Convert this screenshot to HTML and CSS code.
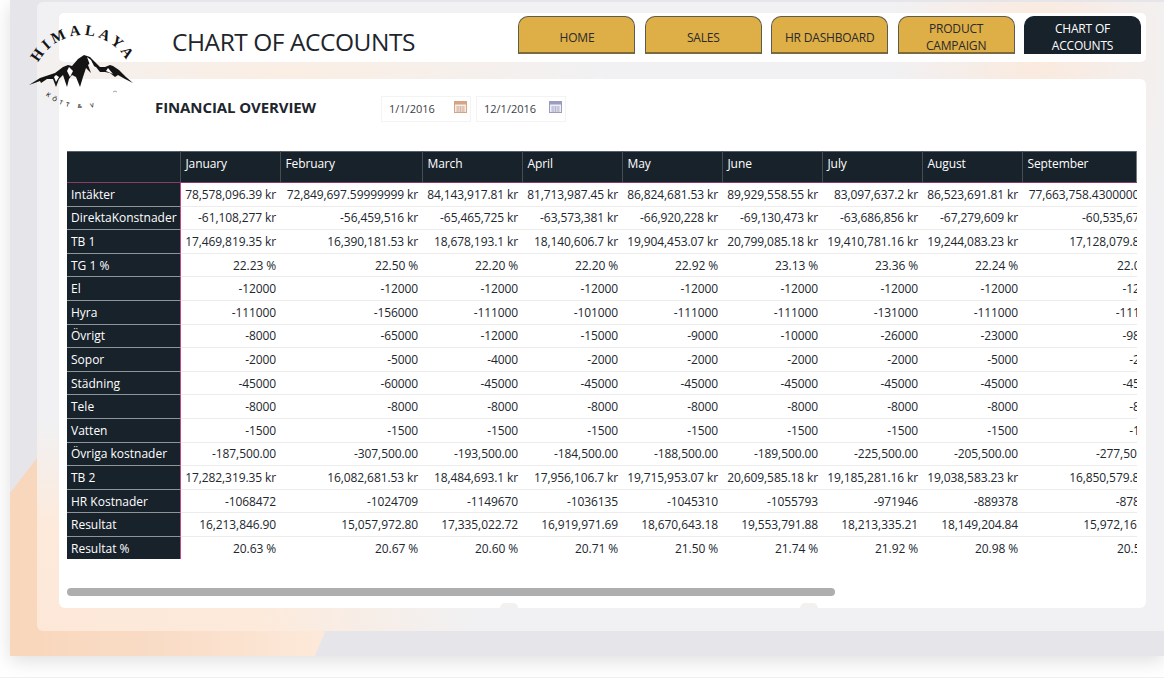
FILE: index.html
```html
<!DOCTYPE html>
<html lang="sv">
<head>
<meta charset="utf-8">
<title>Chart of Accounts</title>
<link rel="stylesheet" href="styles.css">
</head>
<body>
<div class="stage">
  <div class="panel">
    <header class="topbar">
      <h1 class="title">CHART OF ACCOUNTS</h1>
      <nav class="tabs">
        <a class="tab">HOME</a>
        <a class="tab">SALES</a>
        <a class="tab">HR DASHBOARD</a>
        <a class="tab two">PRODUCT CAMPAIGN</a>
        <a class="tab two active">CHART OF ACCOUNTS</a>
      </nav>
    </header>
    <main class="card">
      <div class="filters">
        <h2 class="subtitle">FINANCIAL OVERVIEW</h2>
        <div class="dates">
          <div class="date"><span>1/1/2016</span><svg class="cal" viewBox="0 0 13 13"><rect x="0.5" y="1.5" width="12" height="11" fill="#f6ece4" stroke="#d6a383"/><rect x="0.5" y="1.5" width="12" height="3" fill="#d6a383"/><path d="M2 7h9M2 9h9M2 11h9M4 6v6M6.5 6v6M9 6v6" stroke="#cfae98" stroke-width=".7"/></svg></div>
          <div class="date"><span>12/1/2016</span><svg class="cal" viewBox="0 0 13 13"><rect x="0.5" y="1.5" width="12" height="11" fill="#eeeff6" stroke="#9a9cc0"/><rect x="0.5" y="1.5" width="12" height="3" fill="#9a9cc0"/><path d="M2 7h9M2 9h9M2 11h9M4 6v6M6.5 6v6M9 6v6" stroke="#a9abc6" stroke-width=".7"/></svg></div>
        </div>
      </div>
      <div class="table-wrap">
        <table class="matrix">
          <colgroup><col class="c-head"><col class="c"><col class="c-wide"><col class="c"><col class="c"><col class="c"><col class="c"><col class="c"><col class="c"><col class="c-wide"></colgroup>
          <thead><tr><th class="corner"></th><th>January</th><th>February</th><th>March</th><th>April</th><th>May</th><th>June</th><th>July</th><th>August</th><th>September</th></tr></thead>
          <tbody>
            <tr><th>Intäkter</th><td>78,578,096.39 kr</td><td>72,849,697.59999999 kr</td><td>84,143,917.81 kr</td><td>81,713,987.45 kr</td><td>86,824,681.53 kr</td><td>89,929,558.55 kr</td><td>83,097,637.2 kr</td><td>86,523,691.81 kr</td><td>77,663,758.43000001 kr</td></tr>
            <tr><th>DirektaKonstnader</th><td>-61,108,277 kr</td><td>-56,459,516 kr</td><td>-65,465,725 kr</td><td>-63,573,381 kr</td><td>-66,920,228 kr</td><td>-69,130,473 kr</td><td>-63,686,856 kr</td><td>-67,279,609 kr</td><td>-60,535,678 kr</td></tr>
            <tr><th>TB 1</th><td>17,469,819.35 kr</td><td>16,390,181.53 kr</td><td>18,678,193.1 kr</td><td>18,140,606.7 kr</td><td>19,904,453.07 kr</td><td>20,799,085.18 kr</td><td>19,410,781.16 kr</td><td>19,244,083.23 kr</td><td>17,128,079.85 kr</td></tr>
            <tr><th>TG 1 %</th><td>22.23 %</td><td>22.50 %</td><td>22.20 %</td><td>22.20 %</td><td>22.92 %</td><td>23.13 %</td><td>23.36 %</td><td>22.24 %</td><td>22.05 %</td></tr>
            <tr><th>El</th><td>-12000</td><td>-12000</td><td>-12000</td><td>-12000</td><td>-12000</td><td>-12000</td><td>-12000</td><td>-12000</td><td>-12000</td></tr>
            <tr><th>Hyra</th><td>-111000</td><td>-156000</td><td>-111000</td><td>-101000</td><td>-111000</td><td>-111000</td><td>-131000</td><td>-111000</td><td>-111000</td></tr>
            <tr><th>Övrigt</th><td>-8000</td><td>-65000</td><td>-12000</td><td>-15000</td><td>-9000</td><td>-10000</td><td>-26000</td><td>-23000</td><td>-98000</td></tr>
            <tr><th>Sopor</th><td>-2000</td><td>-5000</td><td>-4000</td><td>-2000</td><td>-2000</td><td>-2000</td><td>-2000</td><td>-5000</td><td>-2000</td></tr>
            <tr><th>Städning</th><td>-45000</td><td>-60000</td><td>-45000</td><td>-45000</td><td>-45000</td><td>-45000</td><td>-45000</td><td>-45000</td><td>-45000</td></tr>
            <tr><th>Tele</th><td>-8000</td><td>-8000</td><td>-8000</td><td>-8000</td><td>-8000</td><td>-8000</td><td>-8000</td><td>-8000</td><td>-8000</td></tr>
            <tr><th>Vatten</th><td>-1500</td><td>-1500</td><td>-1500</td><td>-1500</td><td>-1500</td><td>-1500</td><td>-1500</td><td>-1500</td><td>-1500</td></tr>
            <tr><th>Övriga kostnader</th><td>-187,500.00</td><td>-307,500.00</td><td>-193,500.00</td><td>-184,500.00</td><td>-188,500.00</td><td>-189,500.00</td><td>-225,500.00</td><td>-205,500.00</td><td>-277,500.00</td></tr>
            <tr><th>TB 2</th><td>17,282,319.35 kr</td><td>16,082,681.53 kr</td><td>18,484,693.1 kr</td><td>17,956,106.7 kr</td><td>19,715,953.07 kr</td><td>20,609,585.18 kr</td><td>19,185,281.16 kr</td><td>19,038,583.23 kr</td><td>16,850,579.85 kr</td></tr>
            <tr><th>HR Kostnader</th><td>-1068472</td><td>-1024709</td><td>-1149670</td><td>-1036135</td><td>-1045310</td><td>-1055793</td><td>-971946</td><td>-889378</td><td>-878012</td></tr>
            <tr><th>Resultat</th><td>16,213,846.90</td><td>15,057,972.80</td><td>17,335,022.72</td><td>16,919,971.69</td><td>18,670,643.18</td><td>19,553,791.88</td><td>18,213,335.21</td><td>18,149,204.84</td><td>15,972,167.85</td></tr>
            <tr><th>Resultat %</th><td>20.63 %</td><td>20.67 %</td><td>20.60 %</td><td>20.71 %</td><td>21.50 %</td><td>21.74 %</td><td>21.92 %</td><td>20.98 %</td><td>20.57 %</td></tr>
          </tbody>
        </table>
      </div>
      <div class="scrollbar"><div class="thumb"></div></div>
      <i class="notch n1"></i><i class="notch n2"></i>
    </main>
    <svg class="logo" viewBox="0 0 125 105" aria-label="Himalaya">
      <defs>
        <path id="arcTop" d="M13.8 61.3 A50 50 0 0 1 112.2 61.3"/>
        <path id="arcBot" d="M25.6 80.2 A55 55 0 0 0 95 82"/>
      </defs>
      <text class="logo-top" text-anchor="middle"><textPath href="#arcTop" startOffset="50%">HIMALAYA</textPath></text>
      <text class="logo-bot"><textPath href="#arcBot" startOffset="0">KÖTT &amp; V</textPath></text>
      <path fill="#141414" d="M9 70 L20 63 L29 60 L35 58 L43 52 L48 50 L52 51 L58 44 L64 40 L70 42 L75 47 L80 52 L85 52 L90 50 L93 51 L99 55 L106 62 L113 68 L105 64 L98 60 L95 62 L90 58 L85 57 L80 57 L76 52 L73 51 L71 47 L68 50 L71 58 L66 53 L63 62 L60 72 L56 62 L52 60 L49 64 L47 72 L43 60 L39 64 L36 72 L33 64 L27 64 L21 68 L20 66 Z"/>
      <path fill="#fff" d="M67 42 L71 45 L75 53 L70 50 Z M49 52 L53 56 L50 62 L47 56 Z M88 53 L93 59 L86 56 Z M36 60 L39 62 L36 67 L34 62 Z"/>
      <path fill="none" stroke="#888" stroke-width=".8" d="M93 77 Q95 75 97 77"/>
    </svg>
  </div>
</div>
<div class="ticks">
  <i class="tick t1"></i><i class="tick t2"></i><i class="tick t3"></i><i class="tick t5"></i><i class="tick t6"></i><i class="bar"></i>
</div>
</body>
</html>
```
FILE: styles.css
```css
* { box-sizing: border-box; }
html, body { margin: 0; padding: 0; height: 678px; overflow: hidden; background: #fff; }
body { font-family: "Open Sans", "Noto Sans", sans-serif; color: #1d252d; position: relative; }

.stage {
  position: relative;
  margin-left: 10px;
  height: 656px;
  padding: 2px 0 25px 27px;
  background: #e6e5ea;
  box-shadow: 0 5px 18px rgba(0,0,0,.13);
}
.stage::before {
  content: "";
  position: absolute;
  inset: 0;
  background: linear-gradient(90deg, #f8d6bb 0, #f9dcc6 150px, #fde9da 315px);
  clip-path: polygon(0 493px, 27px 458px, 315px 632px, 305px 656px, 0 656px);
}
.panel {
  position: relative;
  height: 629px;
  padding: 11px 18px 23px 22px;
  border-radius: 6px 0 0 6px;
  background:
    radial-gradient(ellipse 440px 210px at 0 100%, #fde8d8 0, #fdeadb 50%, rgba(253,234,219,0) 100%),
    radial-gradient(ellipse 150px 240px at 1000px 50px, #fbeade 0, rgba(251,234,222,0) 100%),
    radial-gradient(ellipse 330px 45px at 250px 70px, #fbeee3 0, rgba(251,238,227,0) 100%),
    #f1f1f3;
  display: flex;
  flex-direction: column;
  gap: 17px;
}
.topbar {
  height: 49px;
  background: #fff;
  border-radius: 5px;
  display: flex;
  justify-content: space-between;
  padding: 3px 5px 0 113px;
}
.title { margin: 8px 0 0; font-size: 24.5px; line-height: 36px; font-weight: 400; color: #1d252d; letter-spacing: -.45px; }
.tabs { display: flex; gap: 9.4px; }
.tab {
  width: 117px;
  height: 38px;
  padding-top: 12px;
  background: #deae47;
  border: 1px solid #5d5a4e;
  border-bottom: 2px solid #7b6a3e;
  border-radius: 10px 10px 0 0;
  font-size: 12px;
  line-height: 17px;
  text-align: center;
  color: #2b2a2a;
  letter-spacing: -.2px;
}
.tab.two { padding: 3px 14px 0; }
.tab.active { background: #18222b; border-color: #18222b; color: #fff; }

.card {
  position: relative;
  flex: 1;
  background: #fff;
  border-radius: 6px;
  display: flex;
  flex-direction: column;
  padding-left: 8px;
}
.notch { position: absolute; bottom: 0; width: 18px; height: 5px; background: #f3f1f0; border-radius: 7px 7px 0 0; }
.n1 { left: 441px; }
.n2 { left: 741px; }
.filters { height: 72px; display: flex; padding-top: 17px; }
.subtitle { margin: 1px 0 0 88px; width: 226px; font-size: 15px; line-height: 20px; font-weight: 700; color: #1d252d; letter-spacing: -.1px; }
.dates { display: flex; gap: 5px; }
.date {
  height: 26px;
  width: 90px;
  border: 1px solid #f3f3f3;
  display: flex;
  align-items: center;
  justify-content: space-between;
  padding: 0 3px 2px 7px;
  font-size: 11px;
  color: #3a4048;
}
.cal { width: 13px; height: 13px; margin-top: -3px; }

.table-wrap { position: relative; width: 1070px; height: 408px; overflow: hidden; }
.table-wrap::after { content: ""; position: absolute; top: 0; right: 0; width: 1px; height: 31px; background: #747a80; }
.matrix { border-collapse: collapse; table-layout: fixed; width: 1097px; font-size: 12px; letter-spacing: -.1px; }
.c-head { width: 113px; }
.c { width: 100px; }
.c-wide { width: 142px; }
.matrix th, .matrix td { padding: 0 4px; white-space: nowrap; overflow: hidden; font-weight: 400; }
.matrix thead th {
  height: 31px;
  background: #18222b;
  color: #fff;
  text-align: left;
  padding: 0 4px 7px 5px;
  border-top: 1px solid #5a6068;
  border-right: 1px solid #454c54;
  border-bottom: 1px solid #8a3a66;
}
.matrix thead th:last-child { border-right: 0; }
.matrix tbody th {
  height: 23.6px;
  background: #18222b;
  color: #fff;
  text-align: left;
  border-bottom: 1px solid #8f9499;
  border-right: 1px solid #c9458c;
  letter-spacing: 0;
}
.matrix tbody tr:last-child th { border-bottom: 0; }
.matrix td { height: 23.6px; text-align: right; color: #22272e; border-bottom: 1px solid #ececec; }
.matrix tbody tr:last-child td { border-bottom: 0; }

.scrollbar { margin-top: 29px; height: 8px; width: 1070px; }
.thumb { width: 768px; height: 8px; border-radius: 4px; background: #aeaeae; }

.logo { position: absolute; left: -17px; top: 13px; width: 125px; height: 105px; }
.logo-top { font-family: "Liberation Serif", serif; font-weight: 700; font-size: 15px; letter-spacing: 3.5px; fill: #141414; }
.logo-bot { font-family: "Open Sans", sans-serif; font-size: 6px; font-weight: 600; letter-spacing: 3.6px; fill: #333; }

.ticks { position: absolute; left: 0; right: 0; top: 677px; height: 1px; border-top: 1px solid #f0f0f0; }
.tick { position: absolute; top: 0; width: 1px; height: 1px; background: #999; }
.t1 { left: 160px; } .t2 { left: 273px; } .t3 { left: 382px; } .t5 { left: 576px; } .t6 { left: 812px; }
.bar { position: absolute; top: 0; left: 1057px; width: 58px; height: 1px; background: #2a6b5a; }
```
